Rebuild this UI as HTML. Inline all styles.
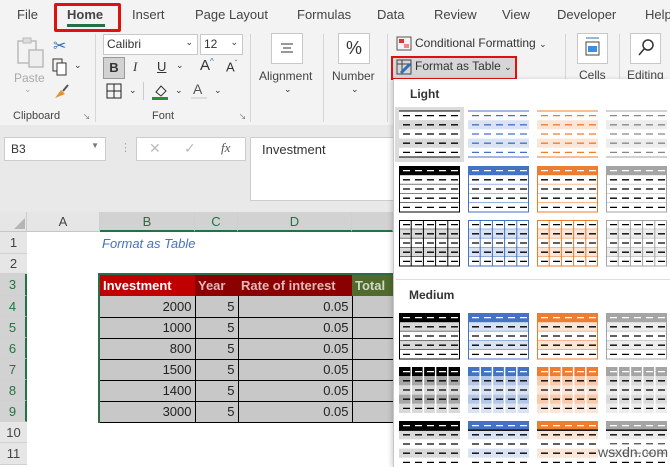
<!DOCTYPE html>
<html><head><meta charset="utf-8"><style>
*{margin:0;padding:0;box-sizing:border-box}
body{width:670px;height:467px;overflow:hidden;position:relative;background:#fff;font-family:"Liberation Sans",Calibri,sans-serif;color:#333}
.a{position:absolute}
.t{font-size:13px;color:#444;top:7px}
.btn{border:1px solid #c8c8c8;background:#fff}
.gl{font-size:11px;color:#444;top:110px}
.vs{width:1px;background:#d6d6d6;top:34px;height:88px}
.ch{top:212px;height:20px;background:#e6e6e6;border-right:1px solid #cfcfcf;border-bottom:1px solid #c6c6c6;font-size:13px;text-align:center;line-height:20px;color:#444}
.rh{left:0;width:27px;background:#e6e6e6;border-bottom:1px solid #d0d0d0;font-size:13px;text-align:center;color:#444}
td{height:21px;border-right:1px solid #000;border-bottom:1px solid #000;font-size:13px;text-align:right;padding:0 3px;background:#c8c8c8;color:#222}
th{height:21px;color:#fff;font-size:13px;text-align:left;padding:0 3px;font-weight:bold}
</style></head><body>
<div class="a" style="left:0;top:0;width:670px;height:125px;background:#f3f3f3"></div>
<div class="a" style="left:0;top:125px;width:393px;height:87px;background:#e9e9e9"></div>
<div class="a t" style="left:17px">File</div>
<div class="a t" style="left:67px;font-weight:bold">Home</div>
<div class="a" style="left:67px;top:24px;width:38px;height:3px;background:#217346"></div>
<div class="a" style="left:54px;top:3px;width:67px;height:29px;border:3px solid #e01010;border-radius:2px"></div>
<div class="a t" style="left:132px">Insert</div>
<div class="a t" style="left:195px">Page Layout</div>
<div class="a t" style="left:297px">Formulas</div>
<div class="a t" style="left:377px">Data</div>
<div class="a t" style="left:434px">Review</div>
<div class="a t" style="left:502px">View</div>
<div class="a t" style="left:557px">Developer</div>
<div class="a t" style="left:645px">Help</div>
<svg class="a" style="left:16px;top:37px" width="30" height="32"><rect x="2" y="4" width="18" height="22" fill="none" stroke="#bbb" stroke-width="1.5"/><rect x="7" y="1" width="8" height="5" fill="#ddd" stroke="#bbb"/><rect x="13" y="13" width="14" height="17" fill="#eee" stroke="#bbb" stroke-width="1.5"/></svg>
<div class="a" style="left:14px;top:71px;font-size:12px;color:#aaa">Paste</div>
<div class="a" style="left:24px;top:84px;font-size:9px;color:#aaa">⌄</div>
<div class="a" style="left:53px;top:36px;font-size:16px;color:#2f6fb5">✂</div>
<svg class="a" style="left:52px;top:58px" width="16" height="18"><rect x="1" y="1" width="9" height="12" fill="none" stroke="#333"/><rect x="5" y="5" width="9" height="12" fill="#fff" stroke="#333"/></svg>
<div class="a" style="left:74px;top:60px;font-size:9px">⌄</div>
<svg class="a" style="left:52px;top:82px" width="18" height="18"><path d="M3 16 L9 8 L13 12 Z" fill="#e8902c"/><path d="M11 9 L16 3" stroke="#555" stroke-width="2"/></svg>
<div class="a gl" style="left:13px">Clipboard</div>
<div class="a" style="left:83px;top:112px;font-size:8px;color:#777">↘</div>
<div class="a vs" style="left:95px"></div>
<div class="a btn" style="left:103px;top:34px;width:95px;height:21px;font-size:12px;padding:2px 3px">Calibri<span style="position:absolute;right:4px;font-size:9px">⌄</span></div>
<div class="a btn" style="left:200px;top:34px;width:43px;height:21px;font-size:12px;padding:2px 3px">12<span style="position:absolute;right:4px;font-size:9px">⌄</span></div>
<div class="a" style="left:103px;top:57px;width:22px;height:22px;background:#d2d2d2;border:1px solid #999;font-weight:bold;font-size:13px;text-align:center;line-height:20px">B</div>
<div class="a" style="left:133px;top:59px;font-style:italic;font-size:13px;font-family:'Liberation Serif'">I</div>
<div class="a" style="left:157px;top:59px;font-size:13px;text-decoration:underline">U</div>
<div class="a" style="left:176px;top:60px;font-size:9px">⌄</div>
<div class="a" style="left:200px;top:57px;font-size:15px">A<sup style="font-size:8px;color:#2f6fb5">^</sup></div>
<div class="a" style="left:226px;top:59px;font-size:13px">A<sup style="font-size:8px;color:#2f6fb5">ˇ</sup></div>
<svg class="a" style="left:106px;top:83px" width="16" height="16"><rect x="1" y="1" width="14" height="14" fill="none" stroke="#222"/><path d="M8 1V15M1 8H15" stroke="#222"/></svg>
<div class="a" style="left:129px;top:85px;font-size:9px">⌄</div>
<div class="a" style="left:143px;top:82px;width:1px;height:18px;background:#ccc"></div>
<svg class="a" style="left:152px;top:82px" width="18" height="18"><path d="M4 10 L9 4 L14 9 L9 14 Z" fill="none" stroke="#333"/><rect x="0" y="15" width="16" height="3" fill="#2e8b37"/></svg>
<div class="a" style="left:175px;top:85px;font-size:9px">⌄</div>
<div class="a" style="left:193px;top:81px;font-size:14px;color:#555">A</div>
<div class="a" style="left:191px;top:97px;width:16px;height:2px;background:#ddd"></div>
<div class="a" style="left:214px;top:85px;font-size:9px">⌄</div>
<div class="a gl" style="left:152px">Font</div>
<div class="a" style="left:239px;top:112px;font-size:8px;color:#777">↘</div>
<div class="a vs" style="left:250px"></div>
<div class="a btn" style="left:271px;top:33px;width:32px;height:31px"><svg width="30" height="29"><path d="M9 10H21M11 14H19M9 18H21" stroke="#333"/></svg></div>
<div class="a" style="left:259px;top:69px;font-size:12px;color:#444">Alignment</div>
<div class="a" style="left:284px;top:84px;font-size:9px">⌄</div>
<div class="a vs" style="left:323px"></div>
<div class="a btn" style="left:338px;top:33px;width:32px;height:31px;font-size:18px;text-align:center;line-height:29px">%</div>
<div class="a" style="left:332px;top:69px;font-size:12px;color:#444">Number</div>
<div class="a" style="left:351px;top:84px;font-size:9px">⌄</div>
<div class="a vs" style="left:387px"></div>
<svg class="a" style="left:396px;top:36px" width="16" height="15"><rect x="1" y="1" width="14" height="13" fill="none" stroke="#555"/><rect x="3" y="3" width="5" height="4" fill="#d33"/><rect x="8" y="8" width="5" height="4" fill="#e88"/></svg>
<div class="a" style="left:415px;top:36px;font-size:12px;color:#333">Conditional Formatting <span style="font-size:9px">⌄</span></div>
<div class="a" style="left:391px;top:56px;width:126px;height:24px;border:2px solid #e01010;background:#d6d6d6"></div>
<svg class="a" style="left:396px;top:59px" width="16" height="16"><rect x="1" y="1" width="14" height="14" fill="none" stroke="#444"/><path d="M1 5H15M6 1V15" stroke="#444"/><path d="M5 14 L14 5" stroke="#2f6fb5" stroke-width="3"/></svg>
<div class="a" style="left:415px;top:59px;font-size:12px;color:#333">Format as Table <span style="font-size:9px">⌄</span></div>
<div class="a vs" style="left:565px;height:45px"></div>
<div class="a btn" style="left:577px;top:33px;width:31px;height:31px"><svg width="29" height="29"><rect x="8" y="8" width="13" height="13" fill="none" stroke="#444"/><rect x="10" y="12" width="9" height="6" fill="#3a8ee6"/><path d="M8 4H21" stroke="#2f6fb5"/></svg></div>
<div class="a" style="left:579px;top:68px;font-size:12px;color:#444">Cells</div>
<div class="a vs" style="left:619px;height:45px"></div>
<div class="a btn" style="left:630px;top:33px;width:31px;height:31px"><svg width="29" height="29"><circle cx="17" cy="11" r="5" fill="none" stroke="#333" stroke-width="1.5"/><path d="M13 15L8 21" stroke="#333" stroke-width="1.5"/></svg></div>
<div class="a" style="left:627px;top:68px;font-size:12px;color:#444">Editing</div>
<div class="a" style="left:4px;top:137px;width:102px;height:24px;background:#fff;border:1px solid #ccc;font-size:12px;padding:4px 6px">B3<span style="position:absolute;right:6px;top:3px;font-size:8px;color:#777">▼</span></div>
<div class="a" style="left:120px;top:141px;font-size:11px;color:#aaa">⋮</div>
<div class="a" style="left:136px;top:137px;width:110px;height:24px;background:#fff;border:1px solid #ccc;font-size:14px;color:#bbb"><span class="a" style="left:12px;top:2px">✕</span><span class="a" style="left:47px;top:2px">✓</span><span class="a" style="left:84px;top:2px;font-style:italic;color:#555;font-family:'Liberation Serif';font-size:13px">fx</span></div>
<div class="a" style="left:250px;top:137px;width:150px;height:64px;background:#fff;border:1px solid #ccc;font-size:13px;padding:4px 11px;color:#333">Investment</div>
<div class="a" style="left:0;top:212px;width:27px;height:20px;background:#e6e6e6;border-right:1px solid #ccc;border-bottom:1px solid #c6c6c6"></div>
<div class="a" style="left:14px;top:218px;width:0;height:0;border-left:11px solid transparent;border-bottom:11px solid #b5b5b5"></div>
<div class="a ch" style="left:27px;width:73px">A</div>
<div class="a ch" style="left:100px;width:95px;background:#d2d2d2;color:#217346;border-bottom:2px solid #217346">B</div>
<div class="a ch" style="left:195px;width:43px;background:#d2d2d2;color:#217346;border-bottom:2px solid #217346">C</div>
<div class="a ch" style="left:238px;width:114px;background:#d2d2d2;color:#217346;border-bottom:2px solid #217346">D</div>
<div class="a ch" style="left:352px;width:41px;background:#d2d2d2;border-bottom:2px solid #217346"></div>
<div class="a rh" style="top:232px;height:22px;line-height:22px">1</div>
<div class="a rh" style="top:254px;height:20px;line-height:20px">2</div>
<div class="a rh" style="top:274px;height:22px;line-height:22px;background:#d2d2d2;color:#217346;border-right:2px solid #217346">3</div>
<div class="a rh" style="top:296px;height:21px;line-height:21px;background:#d2d2d2;color:#217346;border-right:2px solid #217346">4</div>
<div class="a rh" style="top:317px;height:21px;line-height:21px;background:#d2d2d2;color:#217346;border-right:2px solid #217346">5</div>
<div class="a rh" style="top:338px;height:21px;line-height:21px;background:#d2d2d2;color:#217346;border-right:2px solid #217346">6</div>
<div class="a rh" style="top:359px;height:21px;line-height:21px;background:#d2d2d2;color:#217346;border-right:2px solid #217346">7</div>
<div class="a rh" style="top:380px;height:21px;line-height:21px;background:#d2d2d2;color:#217346;border-right:2px solid #217346">8</div>
<div class="a rh" style="top:401px;height:21px;line-height:21px;background:#d2d2d2;color:#217346;border-right:2px solid #217346">9</div>
<div class="a rh" style="top:422px;height:21px;line-height:21px">10</div>
<div class="a rh" style="top:443px;height:22px;line-height:22px">11</div>
<div class="a" style="left:102px;top:236px;font-size:13px;font-style:italic;color:#4472c4">Format as Table</div>
<div class="a" style="left:98px;top:273px;width:300px;height:150px;border:2px solid #2e6b47"></div>
<table class="a" style="left:100px;top:275px;border-collapse:collapse;width:300px;table-layout:fixed">
<tr><th style="width:95px;background:#c00000">Investment</th><th style="width:43px;background:#8b0000;color:#e6b8b8">Year</th><th style="width:114px;background:#8b0000;color:#e6b8b8">Rate of interest</th><th style="background:#4f6b2e;color:#cfd9c2">Total</th></tr>
<tr><td>2000</td><td>5</td><td>0.05</td><td></td></tr>
<tr><td>1000</td><td>5</td><td>0.05</td><td></td></tr>
<tr><td>800</td><td>5</td><td>0.05</td><td></td></tr>
<tr><td>1500</td><td>5</td><td>0.05</td><td></td></tr>
<tr><td>1400</td><td>5</td><td>0.05</td><td></td></tr>
<tr><td>3000</td><td>5</td><td>0.05</td><td></td></tr>
</table>
<div class="a" style="left:393px;top:79px;width:277px;height:388px;background:#fff;border-left:1px solid #c6c6c6;box-shadow:-2px 0 4px rgba(0,0,0,.15)"></div>
<div class="a" style="left:410px;top:87px;font-size:12px;font-weight:bold;color:#333">Light</div>
<div class="a" style="left:396px;top:279px;width:274px;height:1px;background:#ddd"></div>
<div class="a" style="left:409px;top:288px;font-size:12px;font-weight:bold;color:#333">Medium</div>
<div class="a" style="left:395px;top:107px;width:69px;height:55px;background:#dcdcdc"></div>
<svg id="g" class="a" style="left:0;top:0" width="670" height="467"></svg>
<div class="a" style="left:598px;top:444px;font-size:14px;color:#555;background:rgba(255,255,255,.6)">wsxdn.com</div>
<script>
var X=[399,468,537,606],C=['#000','#4472c4','#ed7d31','#a5a5a5'],L=['#d9d9d9','#dae3f3','#fbe5d6','#ededed'],M=['#a6a6a6','#b4c7e7','#f8cbad','#dbdbdb'];
var s='';
function dash(x,y,c){s+='<line x1="'+(x+3)+'" y1="'+y+'" x2="'+(x+59)+'" y2="'+y+'" stroke="'+c+'" stroke-width="1.3" stroke-dasharray="7 5"/>';}
function r(x,y,w,h,f,st){s+='<rect x="'+x+'" y="'+y+'" width="'+w+'" height="'+h+'" fill="'+f+'"'+(st?' stroke="'+st+'"':'')+'/>';}
function th(ty,x,i,type){var h=9.2;
 for(var k=0;k<5;k++){var y=ty+k*h,f='#fff',dc=i==0?'#000':C[i];
  if(type==1){ if(k%2==1)f=L[i]; dc=i==3?'#888':(i==0?'#000':C[i]); }
  else if(type==3){dc='#000';f=k%2==1?L[i]:'#fff';}
  else{ if(k==0){f=C[i];dc='#fff';} else if(type==2||type==4){dc='#000'; if(type==4&&k%2==1)f=L[i];} else if(type==5){f=k%2==1?M[i]:L[i];dc='#000';} else if(type==6){f=k%2==1?L[i]:'#fff';dc='#000';} }
  r(x,y,61,h,f); dash(x+1,y+h/2,dc);
  if(type==2||type==3||type==4)s+='<line x1="'+x+'" y1="'+(y+h)+'" x2="'+(x+61)+'" y2="'+(y+h)+'" stroke="'+(i==0?'#000':C[i])+'"/>';
 }
 if(type==1){s+='<line x1="'+x+'" y1="'+ty+'" x2="'+(x+61)+'" y2="'+ty+'" stroke="'+(i==0?'#000':C[i])+'"/><line x1="'+x+'" y1="'+(ty+46)+'" x2="'+(x+61)+'" y2="'+(ty+46)+'" stroke="'+(i==0?'#000':C[i])+'"/>';}
 if(type==6){s+='<line x1="'+x+'" y1="'+(ty+9.2)+'" x2="'+(x+61)+'" y2="'+(ty+9.2)+'" stroke="#000" stroke-width="1.3"/>';}
 if(type==3||type==5){for(var c=1;c<5;c++)s+='<line x1="'+(x+c*12.2)+'" y1="'+ty+'" x2="'+(x+c*12.2)+'" y2="'+(ty+46)+'" stroke="'+(type==5?'#fff':(i==0?'#000':C[i]))+'" stroke-width="'+(type==5?1.5:1)+'"/>';}
 if(type>=2&&type<=4)r(x+.5,ty+.5,60,45.5,'none',i==0?'#000':C[i]);
}
var rows=[[111,1],[166,2],[220,3],[313,4],[367,5],[421,6]];
rows.forEach(function(q){for(var i=0;i<4;i++)th(q[0],X[i],i,q[1]);});
document.getElementById('g').innerHTML=s;
</script>
</body></html>
